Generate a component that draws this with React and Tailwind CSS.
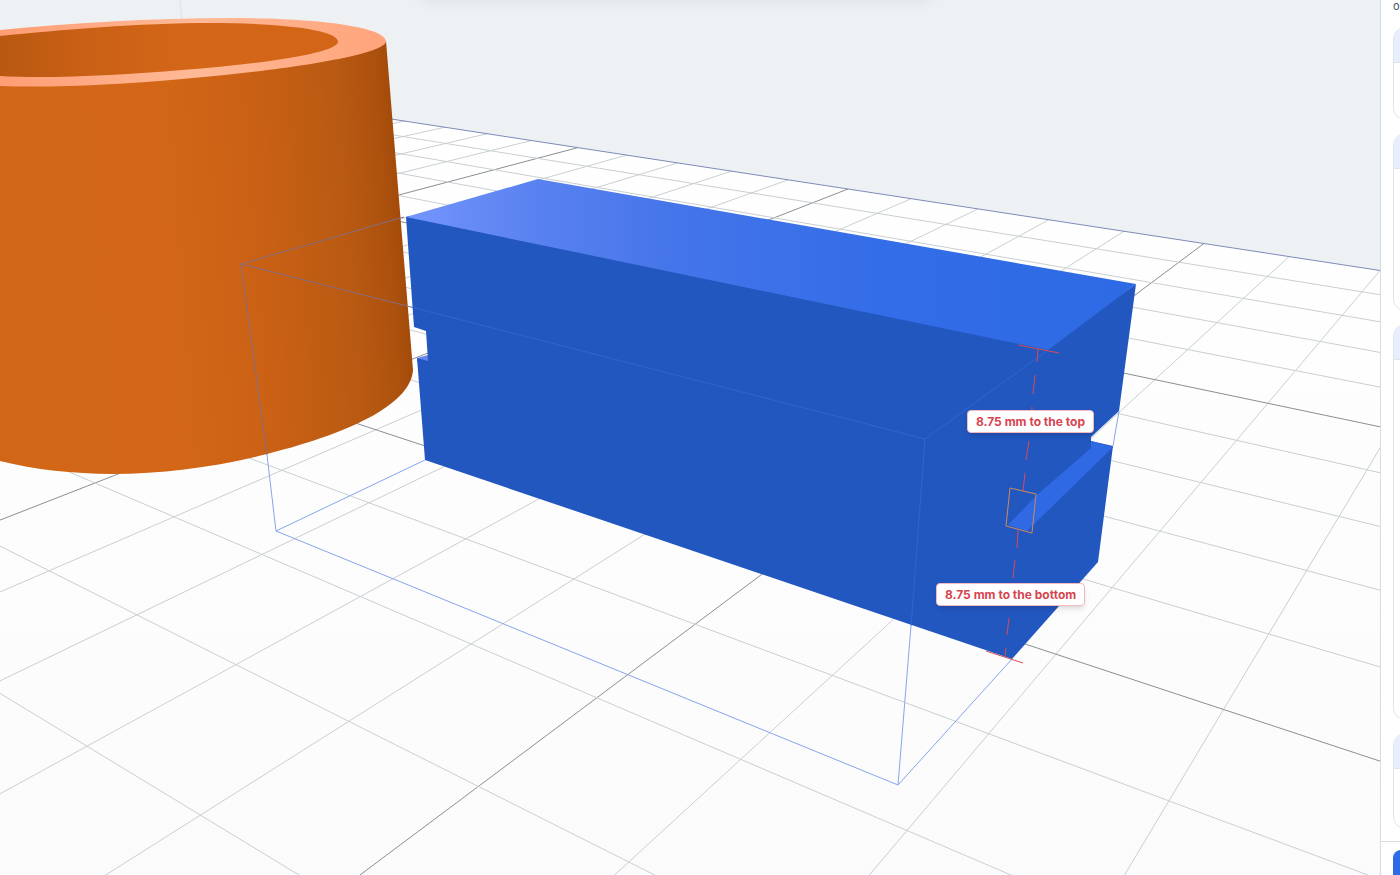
const VIEW_W = 1380;
const VIEW_H = 875;

// Screen positions of the floor cells (5,0) (12,0) (12,12) (5,12)
const FLOOR_CORNERS = [
  [848, 189],
  [1380, 270.5],
  [907, 830.5],
  [95, 483],
];

function makeProjection([[x0, y0], [x1, y1], [x2, y2], [x3, y3]]) {
  const dx1 = x1 - x2;
  const dx2 = x3 - x2;
  const dy1 = y1 - y2;
  const dy2 = y3 - y2;
  const sx = x0 - x1 + x2 - x3;
  const sy = y0 - y1 + y2 - y3;
  const det = dx1 * dy2 - dx2 * dy1;
  const g = (sx * dy2 - dx2 * sy) / det;
  const h = (dx1 * sy - sx * dy1) / det;

  return (col, row) => {
    const u = (col - 5) / 7;
    const v = row / 12;
    const w = g * u + h * v + 1;
    return [
      ((x1 - x0 + g * x1) * u + (x3 - x0 + h * x3) * v + x0) / w,
      ((y1 - y0 + g * y1) * u + (y3 - y0 + h * y3) * v + y0) / w,
    ];
  };
}

const project = makeProjection(FLOOR_CORNERS);

function range(from, to) {
  return Array.from({ length: to - from + 1 }, (_, i) => from + i);
}

function GridLine({ from, to, major, edge }) {
  const [x1, y1] = project(...from);
  const [x2, y2] = project(...to);
  const color = edge ? "#7d8cb8" : major ? "#8b8f94" : "#c9cfd2";
  return <line x1={x1} y1={y1} x2={x2} y2={y2} stroke={color} />;
}

function Floor() {
  const left = project(-6, 0);
  const right = project(14, 0);

  return (
    <g>
      <polygon
        points={`${left} ${right} ${VIEW_W + 200},${VIEW_H} ${VIEW_W},${VIEW_H + 200} 0,${VIEW_H + 200} 0,100`}
        fill="url(#floor)"
      />
      {range(-5, 14).map((col) => (
        <GridLine key={`c${col}`} from={[col, 0]} to={[col, 15]} major={col % 5 === 0} />
      ))}
      {range(0, 15).map((row) => (
        <GridLine
          key={`r${row}`}
          from={[-5, row]}
          to={[14, row]}
          major={row % 5 === 0}
          edge={row === 0}
        />
      ))}
    </g>
  );
}

function Cylinder() {
  return (
    <g>
      <path
        d="M0 60 L386 41 L413 370 C411 402 358 431 267 454 C177 477 80 481 0 461 Z"
        fill="url(#cylinderSide)"
      />
      <path
        d="M0 30 C70 23 150 18 230 18 C320 18 384 27 386 41 C387 54 290 70 182 79 C115 85 50 88 0 86 Z"
        fill="url(#cylinderRim)"
      />
      <path
        d="M0 36 C60 30 140 23 210 23 C285 23 336 30 338 41 C340 53 262 64 182 70 C120 75 50 79 0 76 Z"
        fill="url(#cylinderInside)"
      />
    </g>
  );
}

function Block() {
  return (
    <g>
      <polygon points="417,358 428,355 428,362 417,362" fill="#6484ee" />
      <polygon
        points="406,217 409,216 1048,346 1136,284 1119,411 1091,437 1091,441 1113,446 1098,562 1012,659 425,460 417,358 428,361 426,331 414,327"
        fill="#2357c0"
      />
      <polygon points="406,217 538,179 1136,284 1048,350" fill="url(#blockTop)" />
      <polygon
        points="1091,441 1113,447 1027,531 1008,525 1037,495 1091,448"
        fill="#2f6ae4"
      />
    </g>
  );
}

// Outline of the block before it was moved
function GhostBox() {
  return (
    <g fill="none">
      <path
        d="M267 455 L276 531 L898 785 L1012 659 M276 531 L425 460 M898 785 L911 626 M1119 411 L1113 446"
        stroke="#86a5ec"
      />
      <path d="M404 217 L241 264 L267 455 M241 264 L411 307" stroke="#856d82" />
      <path d="M411 307 L925 439 L911 626 M925 439 L1048 350" stroke="#2e66d4" />
    </g>
  );
}

function Measurements() {
  return (
    <g fill="none">
      <path
        d="M1018 345 L1059 353 M1038 349 L1037 362 M1035 375 L1033 394 M1032 407 L1031 426 M1029 441 L1026 460 M1025 473 L1023 491 M1018 530 L1017 548 M1015 560 L1013 578 M1011 590 L1010 606 M1009 618 L1007 635 M1006 648 L1005 657 M986 651 L1023 663"
        stroke="#d94a55"
      />
      <polygon points="1010,488 1036,494 1032,533 1006,526" stroke="#cf8a5a" />
    </g>
  );
}

function Scene() {
  return (
    <svg
      viewBox={`0 0 ${VIEW_W} ${VIEW_H}`}
      preserveAspectRatio="xMinYMin slice"
      className="block w-full h-full"
      role="img"
      aria-label="3D view"
    >
      <defs>
        <linearGradient id="floor" x1="0" y1="0" x2="0" y2="1">
          <stop offset="0" stopColor="#ffffff" />
          <stop offset="1" stopColor="#fafafa" />
        </linearGradient>
        <linearGradient id="cylinderSide" gradientUnits="userSpaceOnUse" x1="0" y1="260" x2="408" y2="228">
          <stop offset="0" stopColor="#d26617" />
          <stop offset="0.4" stopColor="#d36717" />
          <stop offset="0.62" stopColor="#cb6115" />
          <stop offset="0.85" stopColor="#b95a12" />
          <stop offset="0.95" stopColor="#ac510e" />
          <stop offset="1" stopColor="#a14808" />
        </linearGradient>
        <linearGradient id="cylinderRim" gradientUnits="userSpaceOnUse" x1="0" y1="0" x2="386" y2="0">
          <stop offset="0" stopColor="#ff9d74" />
          <stop offset="0.5" stopColor="#ffb996" />
          <stop offset="1" stopColor="#ffa47b" />
        </linearGradient>
        <linearGradient id="cylinderInside" gradientUnits="userSpaceOnUse" x1="0" y1="0" x2="338" y2="0">
          <stop offset="0" stopColor="#b85811" />
          <stop offset="0.25" stopColor="#c96015" />
          <stop offset="0.55" stopColor="#d46618" />
          <stop offset="1" stopColor="#d26517" />
        </linearGradient>
        <linearGradient id="blockTop" gradientUnits="userSpaceOnUse" x1="406" y1="0" x2="1136" y2="0">
          <stop offset="0" stopColor="#7495fd" />
          <stop offset="0.17" stopColor="#5a82f0" />
          <stop offset="0.38" stopColor="#4474ea" />
          <stop offset="0.65" stopColor="#336de7" />
          <stop offset="1" stopColor="#2e6ae5" />
        </linearGradient>
      </defs>
      <rect x="-100" y="-100" width="1800" height="1200" fill="#edf1f4" />
      <line x1="180" y1="0" x2="182" y2="20" stroke="#dde1ea" />
      <Floor />
      <Cylinder />
      <Block />
      <GhostBox />
      <Measurements />
    </svg>
  );
}

function MeasureLabel({ className, children }) {
  return (
    <span
      className={`absolute whitespace-nowrap rounded border border-[#f3b9bf] bg-white px-2 text-xs leading-[21px] font-bold text-[#d64550] shadow-md ${className}`}
    >
      {children}
    </span>
  );
}

function PanelCard({ className }) {
  return (
    <section
      className={`w-64 shrink-0 overflow-hidden rounded-xl border border-[#dfe3ea] bg-white ${className}`}
    >
      <div className="h-[35px] border-b border-[#dfe3ea] bg-[#e9eefe]" />
    </section>
  );
}

function SidePanel() {
  return (
    <aside className="flex w-5 shrink-0 flex-col overflow-hidden border-l border-[#d9dde3] bg-white">
      <div className="flex min-h-0 flex-1 flex-col gap-[13px] overflow-hidden pl-3">
        <p className="-mb-[13px] h-[27px] shrink-0 text-[11px] leading-3 text-[#4b5563]">o</p>
        <PanelCard className="h-[93px]" />
        <PanelCard className="h-[178px]" />
        <PanelCard className="h-[396px]" />
        <PanelCard className="h-[96px]" />
      </div>
      <div className="h-[34px] shrink-0 border-t border-[#d9dde3] pt-2 pl-3">
        <button aria-label="Apply" className="h-9 w-64 rounded-lg bg-[#2f6ae6]" />
      </div>
    </aside>
  );
}

export default function App() {
  return (
    <div className="flex h-screen overflow-hidden bg-white font-['Inter',sans-serif]">
      <main className="relative min-w-0 flex-1 overflow-hidden">
        <Scene />
        <div className="absolute -top-11 left-[416px] h-10 w-[520px] rounded-xl bg-white shadow-lg shadow-black/5" />
        <MeasureLabel className="left-[967px] top-[410px]">8.75 mm to the top</MeasureLabel>
        <MeasureLabel className="left-[936px] top-[583px]">8.75 mm to the bottom</MeasureLabel>
      </main>
      <SidePanel />
    </div>
  );
}
